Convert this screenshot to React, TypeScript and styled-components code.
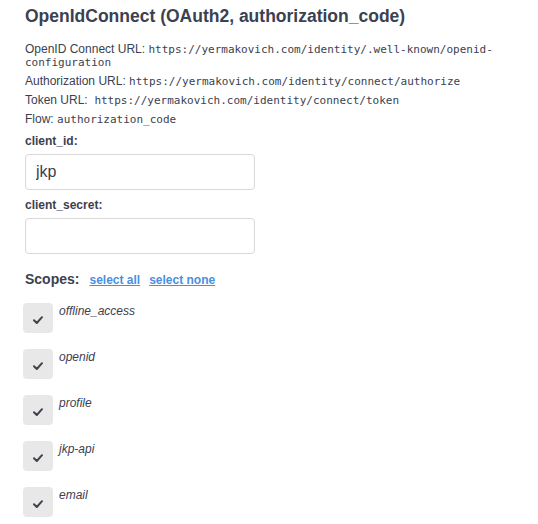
import React from "react";
import styled, { createGlobalStyle } from "styled-components";

const Global = createGlobalStyle`
  html, body { margin: 0; padding: 0; background: #fff; }
  body { font-family: "Liberation Sans", Arial, sans-serif; color: #3b4151; }
`;

const Container = styled.div`
  padding: 6px 25px 0 25px;
  width: 538px;
  box-sizing: border-box;
`;

const Title = styled.h4`
  margin: 0 0 17px;
  font-size: 17.5px;
  line-height: 20px;
  font-weight: 700;
  color: #3b4151;
`;

const Info = styled.p`
  margin: 0 0 6px;
  font-size: 12px;
  line-height: 13px;
  color: #3b4151;
`;

const Code = styled.code`
  font-family: "DejaVu Sans Mono", "Liberation Mono", monospace;
  font-size: 11px;
  line-height: 1;
  color: #3b4151;
`;

const Field = styled.div`
  display: flex;
  flex-direction: column;
  align-items: flex-start;
  margin-top: 8px;
`;

const Label = styled.label`
  font-size: 12px;
  line-height: 14px;
  font-weight: 700;
  color: #3b4151;
`;

const Input = styled.input`
  margin: 6px 0 0;
  width: 230px;
  height: 36px;
  box-sizing: border-box;
  padding: 8px 10px;
  border: 1px solid #d9d9d9;
  border-radius: 4px;
  background: #fff;
  font-family: "Liberation Sans", Arial, sans-serif;
  font-size: 16px;
  color: #3b4151;
  outline: none;
`;

const ScopesHeader = styled.div`
  display: flex;
  align-items: baseline;
  gap: 9px;
  margin-top: 17px;
`;

const ScopesTitle = styled.span`
  font-size: 14px;
  line-height: 16px;
  font-weight: 700;
  color: #3b4151;
  margin-right: 1px;
`;

const LinkButton = styled.a`
  font-size: 12px;
  line-height: 14px;
  font-weight: 700;
  color: #4990e2;
  text-decoration: underline;
  cursor: pointer;
`;

const ScopeList = styled.div`
  display: flex;
  flex-direction: column;
  gap: 16px;
  margin: 16px 0 0 -2px;
`;

const ScopeRow = styled.label`
  display: flex;
  align-items: flex-start;
  gap: 6px;
`;

const Box = styled.span`
  width: 30px;
  height: 30px;
  border-radius: 4px;
  background: #e8e8e8;
  display: flex;
  align-items: center;
  justify-content: center;
  padding-top: 3px;
  box-sizing: border-box;
`;

const ScopeName = styled.span`
  font-size: 12px;
  line-height: 14px;
  font-style: italic;
  color: #3b4151;
  padding-top: 1px;
`;

const Check = () => (
  <svg width="10" height="8" viewBox="0 0 10 8" fill="none">
    <path d="M1 4.2 L3.8 7 L9 1.2" stroke="#41444e" strokeWidth="2" strokeLinecap="round" strokeLinejoin="round" />
  </svg>
);

const scopes = ["offline_access", "openid", "profile", "jkp-api", "email"];

export default function App() {
  return (
    <>
      <Global />
      <Container>
        <Title>OpenIdConnect (OAuth2, authorization_code)</Title>
        <Info>
          OpenID Connect URL: <Code>https://yermakovich.com/identity/.well-known/openid-configuration</Code>
        </Info>
        <Info>
          Authorization URL: <Code>https://yermakovich.com/identity/connect/authorize</Code>
        </Info>
        <Info>
          Token URL:&nbsp; <Code>https://yermakovich.com/identity/connect/token</Code>
        </Info>
        <Info>
          Flow: <Code>authorization_code</Code>
        </Info>
        <Field>
          <Label htmlFor="client_id">client_id:</Label>
          <Input id="client_id" type="text" defaultValue="jkp" />
        </Field>
        <Field>
          <Label htmlFor="client_secret">client_secret:</Label>
          <Input id="client_secret" type="password" />
        </Field>
        <ScopesHeader>
          <ScopesTitle>Scopes:</ScopesTitle>
          <LinkButton>select all</LinkButton>
          <LinkButton>select none</LinkButton>
        </ScopesHeader>
        <ScopeList>
          {scopes.map((s) => (
            <ScopeRow key={s}>
              <Box>
                <Check />
              </Box>
              <ScopeName>{s}</ScopeName>
            </ScopeRow>
          ))}
        </ScopeList>
      </Container>
    </>
  );
}
